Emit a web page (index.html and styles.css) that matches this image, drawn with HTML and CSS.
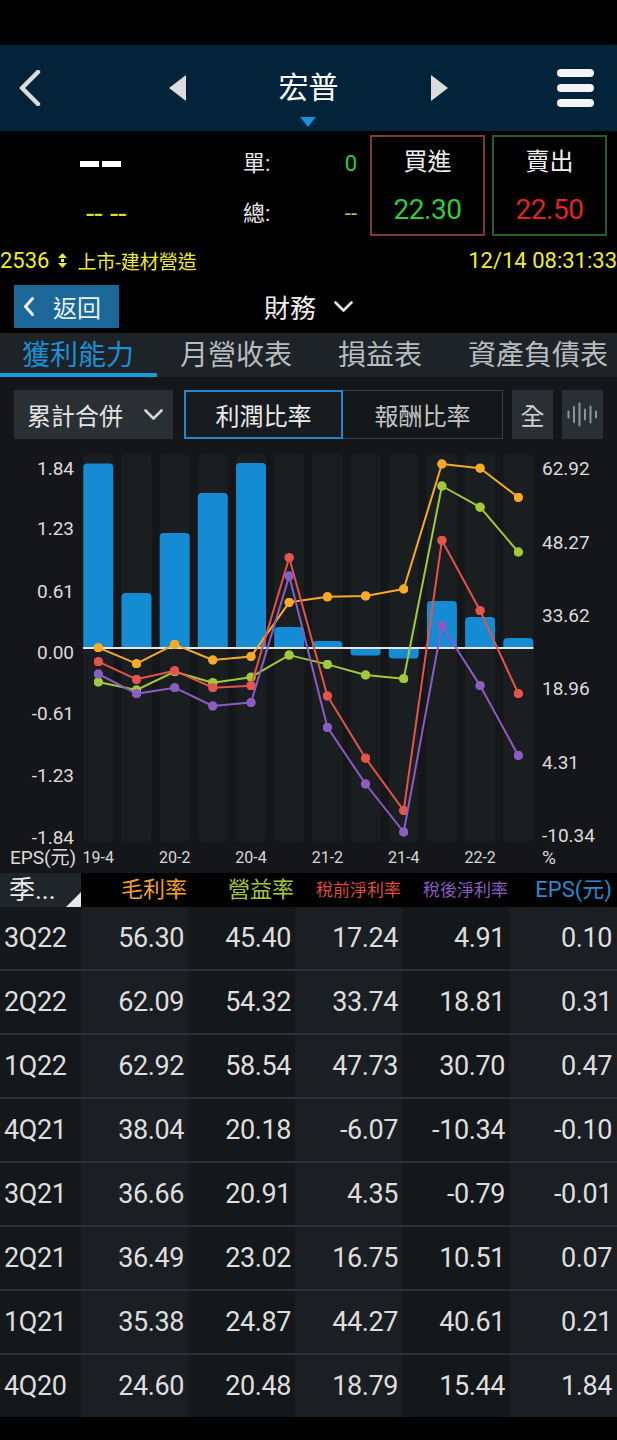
FILE: index.html
```html
<!DOCTYPE html>
<html lang="zh-Hant">
<head>
<meta charset="utf-8">
<title>宏普 財務</title>
<link rel="stylesheet" href="styles.css">
</head>
<body>
<div class="status"></div>

<header class="nav">
  <svg class="nav-back" viewBox="0 0 24 36"><polyline points="20,2 4,18 20,34"/></svg>
  <svg class="nav-prev" viewBox="0 0 17 26"><polygon points="17,0 0,13 17,26"/></svg>
  <div class="nav-title">宏普</div>
  <svg class="nav-next" viewBox="0 0 17 26"><polygon points="0,0 17,13 0,26"/></svg>
  <div class="nav-menu"><span></span><span></span><span></span></div>
  <span class="nav-marker"></span>
</header>

<section class="quote">
  <div class="last">
    <div class="last-dash"><i></i><i></i></div>
    <div class="last-chg">-- --</div>
  </div>
  <div class="vol">
    <span class="vol-l">單:</span><span class="vol-v up">0</span>
    <span class="vol-l">總:</span><span class="vol-v dim">--</span>
  </div>
  <div class="order buy">
    <div class="order-t">買進</div>
    <div class="order-p up">22.30</div>
  </div>
  <div class="order sell">
    <div class="order-t">賣出</div>
    <div class="order-p down">22.50</div>
  </div>
</section>

<div class="info">
  <div class="info-l">
    <span class="code">2536</span>
    <svg class="updown" viewBox="0 0 9 15"><polygon points="4.5,0 9,5 0,5"/><rect x="3" y="6" width="3" height="3"/><polygon points="0,10 9,10 4.5,15"/></svg>
    <span class="market">上市-建材營造</span>
  </div>
  <span class="time">12/14 08:31:33</span>
</div>

<div class="subnav">
  <div class="back">
    <svg viewBox="0 0 10 19"><polyline points="8.5,1.5 1.5,9.5 8.5,17.5"/></svg>
    <span>返回</span>
  </div>
  <div class="sub-title">
    <span>財務</span>
    <svg viewBox="0 0 19 11"><polyline points="1.5,1.5 9.5,9.5 17.5,1.5"/></svg>
  </div>
</div>

<nav class="tabs">
  <span class="tab on">獲利能力</span>
  <span class="tab">月營收表</span>
  <span class="tab">損益表</span>
  <span class="tab">資產負債表</span>
</nav>

<section class="panel">
  <div class="controls">
    <div class="select">
      <span>累計合併</span>
      <svg viewBox="0 0 19 11"><polyline points="1.5,1.5 9.5,9.5 17.5,1.5"/></svg>
    </div>
    <div class="seg">
      <span class="seg-btn on">利潤比率</span>
      <span class="seg-btn">報酬比率</span>
    </div>
    <span class="sq">全</span>
    <span class="sq wave">
      <svg viewBox="0 0 41 49">
        <line x1="6.5" y1="21.5" x2="6.5" y2="27.5"/>
        <line x1="12" y1="17" x2="12" y2="32"/>
        <line x1="17.5" y1="13.5" x2="17.5" y2="35.5"/>
        <line x1="23" y1="19.5" x2="23" y2="29.5"/>
        <line x1="28.5" y1="16.5" x2="28.5" y2="32.5"/>
        <line x1="34" y1="21.5" x2="34" y2="27.5"/>
      </svg>
    </span>
  </div>

  <svg class="chart" viewBox="0 445 617 428" width="617" height="428">
    <defs>
      <marker id="mO" viewBox="0 0 10 10" refX="5" refY="5" markerUnits="userSpaceOnUse" markerWidth="9.5" markerHeight="9.5"><circle cx="5" cy="5" r="5" fill="#f7aa26"/></marker>
      <marker id="mG" viewBox="0 0 10 10" refX="5" refY="5" markerUnits="userSpaceOnUse" markerWidth="9.5" markerHeight="9.5"><circle cx="5" cy="5" r="5" fill="#a2c93b"/></marker>
      <marker id="mR" viewBox="0 0 10 10" refX="5" refY="5" markerUnits="userSpaceOnUse" markerWidth="9.5" markerHeight="9.5"><circle cx="5" cy="5" r="5" fill="#e4544a"/></marker>
      <marker id="mP" viewBox="0 0 10 10" refX="5" refY="5" markerUnits="userSpaceOnUse" markerWidth="9.5" markerHeight="9.5"><circle cx="5" cy="5" r="5" fill="#8b5cc2"/></marker>
    </defs>
    <g class="cols">
      <rect x="83.3" y="454" width="30" height="388" rx="5"/>
      <rect x="121.5" y="454" width="30" height="388" rx="5"/>
      <rect x="159.7" y="454" width="30" height="388" rx="5"/>
      <rect x="197.8" y="454" width="30" height="388" rx="5"/>
      <rect x="236" y="454" width="30" height="388" rx="5"/>
      <rect x="274.2" y="454" width="30" height="388" rx="5"/>
      <rect x="312.4" y="454" width="30" height="388" rx="5"/>
      <rect x="350.6" y="454" width="30" height="388" rx="5"/>
      <rect x="388.7" y="454" width="30" height="388" rx="5"/>
      <rect x="426.9" y="454" width="30" height="388" rx="5"/>
      <rect x="465.1" y="454" width="30" height="388" rx="5"/>
      <rect x="503.3" y="454" width="30" height="388" rx="5"/>
    </g>
    <g class="bars">
      <path d="M83.3 648V467.5Q83.3 463.5 87.3 463.5H109.3Q113.3 463.5 113.3 467.5V648Z"/>
      <path d="M121.5 648V597Q121.5 593 125.5 593H147.5Q151.5 593 151.5 597V648Z"/>
      <path d="M159.7 648V537Q159.7 533 163.7 533H185.7Q189.7 533 189.7 537V648Z"/>
      <path d="M197.8 648V497Q197.8 493 201.8 493H223.8Q227.8 493 227.8 497V648Z"/>
      <path d="M236 648V467Q236 463 240 463H262Q266 463 266 467V648Z"/>
      <path d="M274.2 648V631Q274.2 627 278.2 627H300.2Q304.2 627 304.2 631V648Z"/>
      <path d="M312.4 648V645Q312.4 641 316.4 641H338.4Q342.4 641 342.4 645V648Z"/>
      <path d="M350.6 649V652Q350.6 655.5 354.1 655.5H377.1Q380.6 655.5 380.6 652V649Z"/>
      <path d="M388.7 649V654.5Q388.7 658.5 392.7 658.5H414.7Q418.7 658.5 418.7 654.5V649Z"/>
      <path d="M426.9 648V605Q426.9 601 430.9 601H452.9Q456.9 601 456.9 605V648Z"/>
      <path d="M465.1 648V621Q465.1 617 469.1 617H491.1Q495.1 617 495.1 621V648Z"/>
      <path d="M503.3 648V642Q503.3 638 507.3 638H529.3Q533.3 638 533.3 642V648Z"/>
    </g>
    <line class="zero" x1="83" y1="648" x2="533.5" y2="648"/>
    <polyline class="ln gross" points="98.3,647.7 136.5,663.7 174.7,644.3 212.8,660 251,656.5 289.2,602.3 327.4,596.8 365.6,595.9 403.7,589 441.9,464 480.1,468.2 518.3,497.3"/>
    <polyline class="ln op" points="98.3,682 136.5,690 174.7,671.7 212.8,682.7 251,677.2 289.2,655.1 327.4,664.4 365.6,675 403.7,678.7 441.9,486 480.1,507.2 518.3,552"/>
    <polyline class="ln pre" points="98.3,661.7 136.5,679.3 174.7,670.7 212.8,687.7 251,685.7 289.2,557.7 327.4,695.9 365.6,758.2 403.7,810.5 441.9,540.3 480.1,610.6 518.3,693.5"/>
    <polyline class="ln aft" points="98.3,674 136.5,693.7 174.7,687.7 212.8,706 251,702.5 289.2,576.1 327.4,727.3 365.6,784 403.7,832 441.9,625.8 480.1,685.6 518.3,755.4"/>
    <g class="ax-l">
      <text x="74" y="474.5">1.84</text>
      <text x="74" y="535">1.23</text>
      <text x="74" y="597.5">0.61</text>
      <text x="74" y="658.5">0.00</text>
      <text x="74" y="720">-0.61</text>
      <text x="74" y="781.5">-1.23</text>
      <text x="74" y="843.5">-1.84</text>
    </g>
    <g class="ax-r">
      <text x="542" y="474.5">62.92</text>
      <text x="542" y="548.5">48.27</text>
      <text x="542" y="621.5">33.62</text>
      <text x="542" y="695">18.96</text>
      <text x="542" y="768.5">4.31</text>
      <text x="542" y="841.5">-10.34</text>
      <text x="542" y="864">%</text>
    </g>
    <text class="ax-eps" x="10" y="864">EPS(元)</text>
    <g class="ax-x">
      <text x="98.3" y="863">19-4</text>
      <text x="174.7" y="863">20-2</text>
      <text x="251" y="863">20-4</text>
      <text x="327.4" y="863">21-2</text>
      <text x="403.7" y="863">21-4</text>
      <text x="480.1" y="863">22-2</text>
    </g>
  </svg>
</section>

<section class="table">
  <div class="thead">
    <span class="th-q">季...</span>
    <span class="th c-gross">毛利率</span>
    <span class="th c-op">營益率</span>
    <span class="th small c-pre">稅前淨利率</span>
    <span class="th small c-aft">稅後淨利率</span>
    <span class="th c-eps">EPS(元)</span>
  </div>
  <div class="tr"><span class="td q">3Q22</span><span class="td">56.30</span><span class="td">45.40</span><span class="td">17.24</span><span class="td">4.91</span><span class="td">0.10</span></div>
  <div class="tr"><span class="td q">2Q22</span><span class="td">62.09</span><span class="td">54.32</span><span class="td">33.74</span><span class="td">18.81</span><span class="td">0.31</span></div>
  <div class="tr"><span class="td q">1Q22</span><span class="td">62.92</span><span class="td">58.54</span><span class="td">47.73</span><span class="td">30.70</span><span class="td">0.47</span></div>
  <div class="tr"><span class="td q">4Q21</span><span class="td">38.04</span><span class="td">20.18</span><span class="td">-6.07</span><span class="td">-10.34</span><span class="td">-0.10</span></div>
  <div class="tr"><span class="td q">3Q21</span><span class="td">36.66</span><span class="td">20.91</span><span class="td">4.35</span><span class="td">-0.79</span><span class="td">-0.01</span></div>
  <div class="tr"><span class="td q">2Q21</span><span class="td">36.49</span><span class="td">23.02</span><span class="td">16.75</span><span class="td">10.51</span><span class="td">0.07</span></div>
  <div class="tr"><span class="td q">1Q21</span><span class="td">35.38</span><span class="td">24.87</span><span class="td">44.27</span><span class="td">40.61</span><span class="td">0.21</span></div>
  <div class="tr"><span class="td q">4Q20</span><span class="td">24.60</span><span class="td">20.48</span><span class="td">18.79</span><span class="td">15.44</span><span class="td">1.84</span></div>
</section>
</body>
</html>
```

FILE: styles.css
```css
* { box-sizing: border-box; margin: 0; padding: 0; }
html, body { background: #000; }
body {
  width: 617px;
  height: 1440px;
  overflow: hidden;
  font-family: Roboto, "Noto Sans CJK TC", sans-serif;
  color: #e6e6e6;
}

.status { height: 45px; background: #000; }

/* top navigation */
.nav {
  position: relative;
  height: 86px;
  background: #03233b;
  display: flex;
  align-items: center;
  padding-right: 23px;
}
.nav-back {
  width: 24px; height: 36px; margin-left: 18px;
  fill: none; stroke: #dcdcdc; stroke-width: 4.5;
  stroke-linecap: round; stroke-linejoin: round;
}
.nav-prev { width: 17px; height: 26px; margin-left: 127px; fill: #dcdcdc; }
.nav-next { width: 17px; height: 26px; fill: #dcdcdc; }
.nav-title { flex: 1; text-align: center; font-size: 30px; line-height: 40px; color: #fff; }
.nav-menu { margin-left: 109px; width: 37px; display: flex; flex-direction: column; gap: 7px; }
.nav-menu span { display: block; height: 8px; border-radius: 4px; background: #f4f4f4; }
.nav-marker {
  position: absolute; left: 300px; bottom: 4px;
  width: 0; height: 0;
  border-left: 8px solid transparent;
  border-right: 8px solid transparent;
  border-top: 10px solid #1d8fd8;
}

/* quote */
.quote { height: 109px; display: flex; align-items: flex-start; }
.last { width: 243px; padding-left: 80px; padding-top: 14px; }
.last-dash { height: 38px; display: flex; align-items: center; gap: 3px; }
.last-dash i { display: block; width: 19px; height: 6px; background: #fff; }
.last-chg { margin-top: 12px; height: 38px; line-height: 38px; padding-left: 6px; font-size: 30px; color: #dede22; }
.vol {
  width: 114px; padding-top: 14px;
  display: grid; grid-template-columns: auto 1fr; row-gap: 12px;
  font-size: 22px; line-height: 38px;
}
.vol-l { color: #e8e8e8; }
.vol-v { text-align: right; }
.vol-v.dim { color: #bcbc6a; }
.up { color: #2ecc40; }
.down { color: #e02424; }
.order {
  margin-top: 4px; width: 115px; height: 101px;
  border: 2px solid #7e3838;
  text-align: center; padding-top: 10px;
}
.order.buy { margin-left: 13px; }
.order.sell { margin-left: 7px; border-color: #2b5a2b; }
.order-t { font-size: 24px; line-height: 30px; color: #f0f0f0; }
.order-p { font-size: 28px; line-height: 36px; margin-top: 15px; letter-spacing: -0.5px; }

/* info line */
.info { height: 40px; display: flex; align-items: center; justify-content: space-between; color: #f0ee30; }
.info-l { display: flex; align-items: center; }
.code { font-size: 22px; }
.updown { width: 9px; height: 15px; margin: 0 10px 0 9px; fill: #f0ee30; }
.market { font-size: 19px; }
.time { font-size: 22px; }

/* sub navigation */
.subnav { height: 53px; display: grid; grid-template-columns: 1fr auto 1fr; align-items: center; }
.back {
  justify-self: start; margin-left: 14px;
  width: 105px; height: 43px; background: #1b6797;
  display: flex; align-items: center; gap: 19px; padding-left: 10px;
  color: #eaf2f8; font-size: 24px;
}
.back svg { width: 10px; height: 19px; fill: none; stroke: #eaf2f8; stroke-width: 3; stroke-linecap: round; stroke-linejoin: round; }
.sub-title { display: flex; align-items: center; gap: 18px; font-size: 26px; color: #ececec; }
.sub-title svg { width: 19px; height: 11px; fill: none; stroke: #e4e4e4; stroke-width: 2.6; stroke-linecap: round; stroke-linejoin: round; }

/* tabs */
.tabs { height: 44px; background: #1e2327; display: flex; overflow: hidden; white-space: nowrap; }
.tab {
  flex-shrink: 0; padding: 5px 23px 0;
  font-size: 28px; line-height: 35px; color: #b8bcc0;
  border-bottom: 4px solid transparent;
}
.tab:first-child { padding-left: 22px; }
.tab.on { color: #1a8fd3; border-bottom-color: #1a9ad8; }

/* chart panel */
.panel { background: #141619; height: 496px; padding-top: 13px; }
.controls { display: flex; height: 49px; padding-left: 14px; }
.select {
  width: 159px; background: #2a2f33;
  display: flex; align-items: center; justify-content: space-between;
  padding: 0 10px 0 13px; font-size: 24px; color: #e4e4e4;
}
.select svg { width: 19px; height: 11px; fill: none; stroke: #d4d4d4; stroke-width: 2.6; stroke-linecap: round; stroke-linejoin: round; }
.seg { margin-left: 11px; display: flex; }
.seg-btn {
  width: 160px; display: flex; align-items: center; justify-content: center;
  font-size: 24px; color: #c4c4c4;
  border: 1px solid #3a3f44; border-left: none; background: #15181b;
}
.seg-btn.on { width: 159px; border: 2px solid #2587c8; color: #ececec; background: #171b1f; }
.sq {
  width: 41px; margin-left: 9px; background: #2a2f33;
  display: flex; align-items: center; justify-content: center;
  font-size: 24px; color: #cfd3d6;
}
.wave svg { width: 41px; height: 49px; stroke: #8d9398; stroke-width: 2; stroke-linecap: round; }

.chart { display: block; margin-top: 6px; }
.cols rect { fill: #1b1e21; }
.bars path { fill: #148bd2; }
.zero { stroke: #e6e6e6; stroke-width: 2; }
.ln { fill: none; stroke-width: 2; stroke-linejoin: round; }
.gross { stroke: #f7aa26; marker-start: url(#mO); marker-mid: url(#mO); marker-end: url(#mO); }
.op { stroke: #a2c93b; marker-start: url(#mG); marker-mid: url(#mG); marker-end: url(#mG); }
.pre { stroke: #e4544a; marker-start: url(#mR); marker-mid: url(#mR); marker-end: url(#mR); }
.aft { stroke: #8b5cc2; marker-start: url(#mP); marker-mid: url(#mP); marker-end: url(#mP); }
.ax-l text { font-size: 19px; fill: #dcdcdc; text-anchor: end; }
.ax-r text { font-size: 19px; fill: #dcdcdc; }
.ax-eps { font-size: 19px; fill: #dcdcdc; }
.ax-x text { font-size: 16px; fill: #d8d8d8; text-anchor: middle; }

/* table */
.thead, .tr { display: grid; grid-template-columns: 81px repeat(4, 107px) 1fr; }
.thead { height: 34px; background: #000; }
.th { text-align: right; padding-right: 1px; font-size: 22px; line-height: 34px; }
.th.small { font-size: 17px; }
.th.c-eps { padding-right: 5px; }
.th-q {
  position: relative; background: #1f2529;
  padding-left: 9px; font-size: 26px; line-height: 34px; color: #eeeeee;
}
.th-q::after {
  content: ""; position: absolute; right: 0; bottom: 0;
  border-left: 15px solid transparent; border-bottom: 15px solid #e8e8e8;
}
.c-gross { color: #f3a22a; }
.c-op { color: #a4c93a; }
.c-pre { color: #dc4a3c; }
.c-aft { color: #8a5cc0; }
.c-eps { color: #2a8bd2; }

.tr { height: 64px; border-bottom: 3px solid #2c3034; }
.tr:last-child { border-bottom-color: #000; }
.td {
  font-size: 27px; line-height: 62px; text-align: right; letter-spacing: -0.4px;
  padding-right: 4px; color: #dedede; background: #15181b;
}
.td:nth-child(even) { background: #1b1e22; }
.td:last-child { padding-right: 5px; }
.td.q { text-align: left; padding-left: 4px; }
```
